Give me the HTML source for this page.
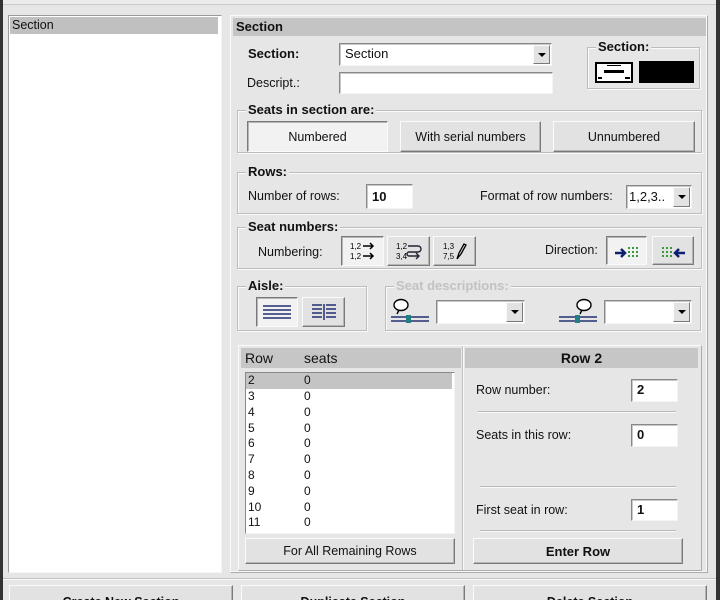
<!DOCTYPE html>
<html style="width:720px;height:600px;overflow:hidden"><head><style>
*{margin:0;padding:0;box-sizing:border-box}
body{width:720px;height:600px;background:#e6e6e6;font-family:"Liberation Sans",sans-serif;font-size:12.5px;color:#111;position:relative;overflow:hidden}
.a{position:absolute}
.b{font-weight:bold;font-size:13px}
.btn{position:absolute;background:#e2e2e2;border:1px solid;border-color:#fafafa #7a7a7a #7a7a7a #fafafa;box-shadow:inset -1px -1px 0 #b5b5b5;display:flex;align-items:center;justify-content:center;font-size:12.5px}
.pr{background:#f2f2f2;border-color:#7a7a7a #fafafa #fafafa #7a7a7a;box-shadow:inset 1px 1px 0 #b5b5b5}
.in{position:absolute;background:#fff;border:1px solid;border-color:#888 #f4f4f4 #f4f4f4 #888;box-shadow:inset 1px 1px 0 #c8c8c8;padding:2px 5px;font-weight:bold;font-size:13px}
.grp{position:absolute;border:1px solid #bdbdbd;box-shadow:1px 1px 0 #fafafa, inset 1px 1px 0 #fafafa}
.gt{position:absolute;background:#e6e6e6;padding:0 2px;font-weight:bold;font-size:13px;top:-9px;left:8px}
.dd{position:absolute;right:1px;top:1px;bottom:1px;width:17px;background:#e2e2e2;border:1px solid;border-color:#fafafa #7a7a7a #7a7a7a #fafafa}
.dd:after{content:"";position:absolute;left:4px;top:7px;border-left:4px solid transparent;border-right:4px solid transparent;border-top:4px solid #000}
.sep{position:absolute;height:2px;border-top:1px solid #b8b8b8;border-bottom:1px solid #fafafa}
</style></head><body>
<div class="a" style="left:0;top:0;width:3px;height:600px;background:#333"></div>
<div class="a" style="right:0;top:0;width:4px;height:600px;background:#333"></div>
<div class="a" style="left:3px;top:0;width:713px;height:5px;background:#ececec;border-bottom:1px solid #c9c9c9"></div>

<div class="a" style="left:8px;top:15px;width:214px;height:558px;background:#fff;border:1px solid;border-color:#9a9a9a #f4f4f4 #f4f4f4 #9a9a9a"></div>
<div class="a" style="left:10px;top:17px;width:208px;height:17px;background:#c0c0c0;padding:1px 2px">Section</div>

<div class="a" style="left:230px;top:15px;width:478px;height:558px;border:1px solid;border-color:#fafafa #aaa #aaa #fafafa;box-shadow:inset -1px -1px 0 #fafafa"></div>
<div class="a b" style="left:233px;top:18px;width:473px;height:18px;background:#c4c4c4;padding:1px 3px">Section</div>

<div class="a b" style="left:248px;top:46px">Section:</div>
<div class="in" style="left:339px;top:43px;width:213px;height:23px;font-weight:normal">Section<div class="dd"></div></div>
<div class="a" style="left:247px;top:76px">Descript.:</div>
<div class="in" style="left:339px;top:72px;width:214px;height:22px"></div>

<div class="grp" style="left:587px;top:47px;width:113px;height:42px"><div class="gt" style="left:8px">Section:</div></div>
<div class="a" style="left:595px;top:62px;width:38px;height:21px;border:2px solid #000;background:#fff">
<div class="a" style="left:10px;top:1px;width:14px;height:1px;background:#000"></div>
<div class="a" style="left:7px;top:6px;width:20px;height:3px;background:#000"></div>
<div class="a" style="left:1px;top:13px;width:4px;height:2px;background:#000"></div>
<div class="a" style="left:28px;top:13px;width:5px;height:2px;background:#000"></div></div>
<div class="a" style="left:639px;top:61px;width:55px;height:22px;background:#000"></div>

<div class="grp" style="left:237px;top:110px;width:465px;height:43px"><div class="gt">Seats in section are:</div></div>
<div class="btn pr" style="left:247px;top:121px;width:141px;height:31px">Numbered</div>
<div class="btn" style="left:400px;top:121px;width:141px;height:31px">With serial numbers</div>
<div class="btn" style="left:553px;top:121px;width:142px;height:31px">Unnumbered</div>

<div class="grp" style="left:237px;top:172px;width:465px;height:42px"><div class="gt">Rows:</div></div>
<div class="a" style="left:248px;top:189px">Number of rows:</div>
<div class="in" style="left:366px;top:184px;width:47px;height:25px;padding-top:4px">10</div>
<div class="a" style="left:480px;top:189px">Format of row numbers:</div>
<div class="in" style="left:626px;top:185px;width:66px;height:24px;font-weight:normal;padding:3px 2px">1,2,3..<div class="dd"></div></div>

<div class="grp" style="left:237px;top:227px;width:465px;height:42px"><div class="gt">Seat numbers:</div></div>
<div class="a" style="left:258px;top:245px">Numbering:</div>
<div class="btn pr" style="left:341px;top:236px;width:43px;height:30px"><svg width="30" height="22"><text x="2" y="9" font-size="8" font-family="Liberation Sans">1,2</text><text x="2" y="19" font-size="8" font-family="Liberation Sans">1,2</text><path d="M15 6h10M22 3l3 3-3 3M15 16h10M22 13l3 3-3 3" stroke="#000" stroke-width="1.5" fill="none"/></svg></div>
<div class="btn" style="left:387px;top:236px;width:43px;height:30px"><svg width="30" height="22"><text x="2" y="9" font-size="8" font-family="Liberation Sans">1,2</text><text x="2" y="19" font-size="8" font-family="Liberation Sans">3,4</text><path d="M14 6h10a3 3 0 0 1 0 6h-9a2 2 0 0 0 0 4h10M22 13l3 3-3 3" stroke="#223" stroke-width="1.4" fill="none"/></svg></div>
<div class="btn" style="left:433px;top:236px;width:43px;height:30px"><svg width="30" height="22"><text x="3" y="9" font-size="8" font-family="Liberation Sans">1,3</text><text x="3" y="19" font-size="8" font-family="Liberation Sans">7,5</text><path d="M17 19l2-6 5-9 2 1-5 9z" stroke="#000" stroke-width="1.3" fill="none"/></svg></div>
<div class="a" style="left:545px;top:243px">Direction:</div>
<div class="btn pr" style="left:606px;top:236px;width:41px;height:29px"><svg width="28" height="18"><path d="M2 11h9M8 7l4 4-4 4" stroke="#102070" stroke-width="2.5" fill="none"/><g fill="#3a9a3a"><rect x="15" y="5" width="2" height="2"/><rect x="19" y="5" width="2" height="2"/><rect x="23" y="5" width="2" height="2"/><rect x="15" y="9" width="2" height="2"/><rect x="19" y="9" width="2" height="2"/><rect x="23" y="9" width="2" height="2"/><rect x="15" y="13" width="2" height="2"/><rect x="19" y="13" width="2" height="2"/><rect x="23" y="13" width="2" height="2"/></g></svg></div>
<div class="btn" style="left:652px;top:236px;width:42px;height:29px"><svg width="28" height="18"><g fill="#3a9a3a"><rect x="3" y="5" width="2" height="2"/><rect x="7" y="5" width="2" height="2"/><rect x="11" y="5" width="2" height="2"/><rect x="3" y="9" width="2" height="2"/><rect x="7" y="9" width="2" height="2"/><rect x="11" y="9" width="2" height="2"/><rect x="3" y="13" width="2" height="2"/><rect x="7" y="13" width="2" height="2"/><rect x="11" y="13" width="2" height="2"/></g><path d="M26 11h-9M20 7l-4 4 4 4" stroke="#102070" stroke-width="2.5" fill="none"/></svg></div>

<div class="grp" style="left:237px;top:286px;width:130px;height:45px"><div class="gt">Aisle:</div></div>
<div class="btn pr" style="left:256px;top:297px;width:42px;height:30px"><svg width="30" height="16"><path d="M1 2h28M1 6h28M1 10h28M1 14h28" stroke="#203070" stroke-width="1.5"/></svg></div>
<div class="btn" style="left:302px;top:297px;width:43px;height:30px"><svg width="30" height="18"><path d="M3 2h10M3 6h10M3 10h10M3 14h10M17 2h10M17 6h10M17 10h10M17 14h10M15 1v16" stroke="#203070" stroke-width="1.5"/></svg></div>

<div class="grp" style="left:385px;top:286px;width:316px;height:45px"><div class="gt" style="color:#c2c2c2">Seat descriptions:</div></div>
<svg class="a" style="left:390px;top:298px" width="42" height="26"><ellipse cx="11" cy="7" rx="7" ry="5.5" fill="#fff" stroke="#000" stroke-width="1.4"/><path d="M9 12l-2 4" stroke="#000" stroke-width="1.4"/><path d="M1 19h38M1 23h38" stroke="#203070" stroke-width="1.5"/><rect x="16" y="17" width="5" height="8" fill="#208080"/></svg>
<div class="in" style="left:436px;top:300px;width:89px;height:24px"><div class="dd"></div></div>
<svg class="a" style="left:558px;top:298px" width="42" height="26"><ellipse cx="26" cy="7" rx="7" ry="5.5" fill="#fff" stroke="#000" stroke-width="1.4"/><path d="M24 12l-2 4" stroke="#000" stroke-width="1.4"/><path d="M1 19h38M1 23h38" stroke="#203070" stroke-width="1.5"/><rect x="17" y="17" width="5" height="8" fill="#208080"/></svg>
<div class="in" style="left:604px;top:300px;width:88px;height:24px"><div class="dd"></div></div>

<div class="a" style="left:238px;top:345px;width:464px;height:226px;border:1px solid;border-color:#fafafa #aaa #aaa #fafafa"></div>
<div class="a" style="left:462px;top:346px;width:2px;height:224px;border-left:1px solid #c0c0c0;border-right:1px solid #fafafa"></div>
<div class="a" style="left:241px;top:348px;width:220px;height:20px;background:#c6c6c6;font-size:14px;padding:2px 4px">Row<span style="position:absolute;left:63px">seats</span></div>
<div class="a" style="left:245px;top:372px;width:210px;height:162px;background:#fff;border:1px solid;border-color:#888 #f4f4f4 #f4f4f4 #888;font-size:12px;line-height:15.8px">
<div style="background:#c4c4c4;width:206px;height:16px;padding-left:2px">2<span style="position:absolute;left:58px">0</span></div>
<div style="padding-left:2px;position:relative">3<span style="position:absolute;left:58px">0</span></div>
<div style="padding-left:2px;position:relative">4<span style="position:absolute;left:58px">0</span></div>
<div style="padding-left:2px;position:relative">5<span style="position:absolute;left:58px">0</span></div>
<div style="padding-left:2px;position:relative">6<span style="position:absolute;left:58px">0</span></div>
<div style="padding-left:2px;position:relative">7<span style="position:absolute;left:58px">0</span></div>
<div style="padding-left:2px;position:relative">8<span style="position:absolute;left:58px">0</span></div>
<div style="padding-left:2px;position:relative">9<span style="position:absolute;left:58px">0</span></div>
<div style="padding-left:2px;position:relative">10<span style="position:absolute;left:58px">0</span></div>
<div style="padding-left:2px;position:relative">11<span style="position:absolute;left:58px">0</span></div>
</div>
<div class="btn" style="left:245px;top:538px;width:210px;height:26px">For All Remaining Rows</div>

<div class="a" style="left:465px;top:348px;width:233px;height:20px;background:#c6c6c6;font-weight:bold;font-size:14px;text-align:center;padding-top:2px">Row 2</div>
<div class="a" style="left:476px;top:383px">Row number:</div>
<div class="in" style="left:631px;top:379px;width:47px;height:23px">2</div>
<div class="sep" style="left:478px;top:411px;width:198px"></div>
<div class="a" style="left:476px;top:428px">Seats in this row:</div>
<div class="in" style="left:631px;top:424px;width:47px;height:23px">0</div>
<div class="sep" style="left:480px;top:486px;width:196px"></div>
<div class="a" style="left:476px;top:503px">First seat in row:</div>
<div class="in" style="left:631px;top:499px;width:47px;height:22px">1</div>
<div class="sep" style="left:480px;top:530px;width:196px"></div>
<div class="btn" style="left:473px;top:538px;width:210px;height:26px;font-weight:bold;font-size:13px">Enter Row</div>

<div class="a" style="left:3px;top:578px;width:713px;height:2px;border-top:1px solid #c0c0c0;border-bottom:1px solid #fafafa"></div>
<div class="a" style="left:0;top:585px;width:720px;height:15px;overflow:hidden">
<div class="btn" style="left:9px;top:0;width:224px;height:30px;align-items:flex-start;padding-top:9px;font-weight:bold">Create New Section</div>
<div class="btn" style="left:241px;top:0;width:224px;height:30px;align-items:flex-start;padding-top:9px;font-weight:bold">Duplicate Section</div>
<div class="btn" style="left:473px;top:0;width:234px;height:30px;align-items:flex-start;padding-top:9px;font-weight:bold">Delete Section</div>
</div>
</body></html>
